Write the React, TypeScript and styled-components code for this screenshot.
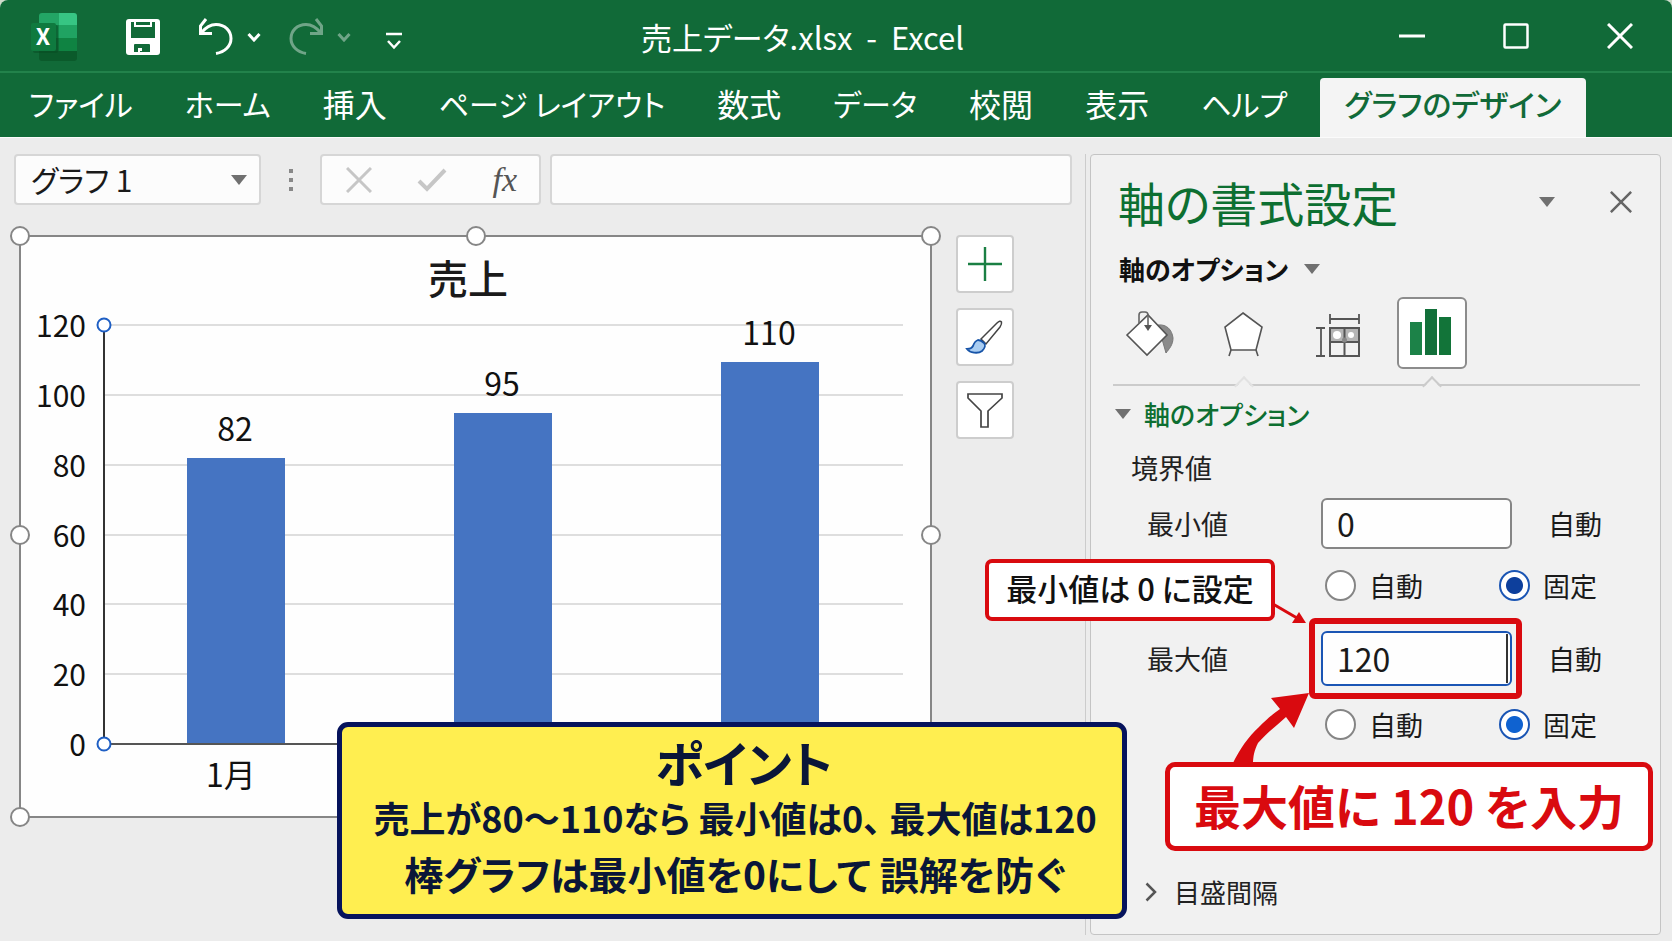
import React, { useState } from "react";
import styled, { createGlobalStyle, css } from "styled-components";

const GREEN = "#116a38";
const RED = "#d90a0f";
const NAVY = "#06135c";

const GlobalStyle = createGlobalStyle`
  *, *::before, *::after { box-sizing: border-box; }
  body {
    margin: 0;
    background: #cfdccb;
    color: #1a1a1a;
    font-family: "Noto Sans CJK JP", "Noto Sans", sans-serif;
    font-feature-settings: "palt";
  }
  button, input, select { font: inherit; font-feature-settings: inherit; color: inherit; margin: 0; padding: 0; }
  button { background: none; border: 0; cursor: pointer; }
  svg { display: block; }
`;

const Window = styled.div`
  display: flex;
  flex-direction: column;
  min-height: 100vh;
  overflow: hidden;
  background: #ececec;
  border-radius: 8px 8px 0 0;
`;

/* ---------- title bar ---------- */

const TitleBar = styled.header`
  display: flex;
  align-items: center;
  height: 73px;
  background: ${GREEN};
  border-bottom: 2px solid #22824b;
  color: #fff;
`;

const QuickAccess = styled.div`
  display: flex;
  align-items: center;
  padding: 3px 0 0 30px;
`;

const QuickButton = styled.button<{ $gap: number; $dim?: boolean }>`
  margin-left: ${(p) => p.$gap}px;
  opacity: ${(p) => (p.$dim ? 0.4 : 1)};
`;

const DocumentTitle = styled.h1`
  flex: 1;
  margin: 0;
  padding: 2px 157px 0 0;
  text-align: center;
  font-size: 31px;
  line-height: 40px;
  font-weight: 400;
  white-space: pre;
`;

const WindowControls = styled.div`
  display: flex;
`;

const WindowButton = styled.button`
  display: grid;
  place-items: center;
  width: 104px;
  height: 71px;
`;

/* ---------- ribbon tabs ---------- */

const Ribbon = styled.nav`
  display: flex;
  align-items: flex-end;
  height: 65px;
  padding-left: 3px;
  background: ${GREEN};
  border-bottom: 1px solid #fbfbfb;
`;

const RibbonTab = styled.button<{ $kanji?: boolean; $active?: boolean }>`
  height: 59px;
  padding: 0 26px 9px;
  font-size: ${(p) => (p.$kanji ? 32 : 30)}px;
  line-height: 48px;
  color: #fff;
  white-space: nowrap;
  ${(p) =>
    p.$active &&
    css`
      margin-left: 7px;
      padding: 0 25px 9px 24px;
      color: ${GREEN};
      font-weight: 500;
      background: #f4f4f4;
      border-radius: 4px 4px 0 0;
    `}
`;

/* ---------- work area ---------- */

const Workspace = styled.main`
  position: relative;
  flex: 1;
  display: grid;
  grid-template-columns: minmax(0, 1fr) 571px;
  padding: 16px 11px 6px 0;
`;

const SheetArea = styled.section`
  margin-right: 4px;
  padding: 0 13px 0 14px;
  border-right: 1px solid #cccccc;
`;

const FormulaRow = styled.div`
  display: flex;
  align-items: stretch;
  height: 51px;
`;

const boxed = css`
  background: #fcfcfc;
  border: 2px solid #d6d6d6;
  border-radius: 4px;
`;

const NameBox = styled.div`
  ${boxed}
  display: flex;
  align-items: center;
  width: 247px;
  padding-right: 12px;
`;

const NameSelect = styled.select`
  flex: 1;
  appearance: none;
  background: none;
  border: 0;
  outline: 0;
  padding: 0 0 2px 15px;
  font-size: 30px;
  line-height: 44px;
`;

const Dots = styled.div`
  display: grid;
  place-items: center;
  width: 59px;
`;

const FormulaTools = styled.div`
  ${boxed}
  display: flex;
  align-items: center;
  justify-content: space-between;
  width: 221px;
  padding: 0 22px 0 24px;
`;

const FxButton = styled.button`
  font-family: "Liberation Serif", serif;
  font-style: italic;
  font-size: 34px;
  line-height: 36px;
  color: #555;
`;

const FormulaInput = styled.input`
  ${boxed}
  flex: 1;
  min-width: 0;
  margin-left: 9px;
  padding: 0 12px;
  font-size: 30px;
`;

const ChartRow = styled.div`
  display: flex;
  align-items: flex-start;
  gap: 24px;
  padding: 30px 58px 0 5px;
`;

const ChartFrame = styled.figure`
  position: relative;
  flex: 1;
  min-width: 0;
  margin: 0;
  background: #fefefe;
  border: 2px solid #868686;
`;

const HandleLayer = styled.div`
  position: absolute;
  inset: -1px;
`;

const Handle = styled.span<{ $x: number; $y: number }>`
  position: absolute;
  left: ${(p) => p.$x}%;
  top: ${(p) => p.$y}%;
  width: 20px;
  height: 20px;
  margin: -10px 0 0 -10px;
  background: #fff;
  border: 2px solid #868686;
  border-radius: 50%;
`;

const ChartTools = styled.div`
  display: flex;
  flex-direction: column;
  gap: 15px;
`;

const ToolButton = styled.button`
  width: 58px;
  height: 58px;
  background: #fff;
  border: 2px solid #cdcdcd;
  border-radius: 4px;
  svg { margin: -2px; }
`;

/* ---------- format pane ---------- */

const Pane = styled.aside`
  position: relative;
  display: flex;
  flex-direction: column;
  padding: 17px 20px 24px 22px;
  background: #f1f1f1;
  border: 1px solid #c4c4c4;
  border-radius: 4px;
`;

const PaneHeader = styled.div`
  display: flex;
  align-items: center;
  padding-left: 5px;
`;

const PaneTitle = styled.h2`
  flex: 1;
  margin: 0;
  font-size: 47px;
  line-height: 60px;
  font-weight: 400;
  color: #0d6f31;
`;

const PaneButton = styled.button`
  display: grid;
  place-items: center;
  width: 38px;
  height: 38px;
  margin-left: 36px;
`;

const OptionsMenu = styled.button`
  display: flex;
  align-items: center;
  gap: 16px;
  margin-top: 19px;
  padding-left: 6px;
  font-size: 26px;
  line-height: 36px;
  font-weight: 700;
  color: #111;
`;

const IconTabs = styled.div`
  display: flex;
  gap: 24px;
  margin-top: 10px;
  padding: 0 0 15px 2px;
  border-bottom: 2px solid #cbcbcb;
`;

const IconTab = styled.button<{ $selected?: boolean; $notch?: string }>`
  position: relative;
  width: 70px;
  height: 72px;
  ${(p) =>
    p.$selected &&
    css`
      background: #fff;
      border: 2px solid #8c8c8c;
      border-radius: 6px;
      svg { margin: -2px; }
    `}
  ${(p) =>
    p.$notch &&
    css`
      &::after {
        content: "";
        position: absolute;
        left: 50%;
        bottom: ${p.$selected ? -26 : -24}px;
        width: 14px;
        height: 14px;
        margin-left: -7px;
        background: linear-gradient(135deg, #f1f1f1 50%, transparent 50%);
        border: solid ${p.$notch};
        border-width: 2px 0 0 2px;
        transform: rotate(45deg);
      }
    `}
`;

const SectionToggle = styled.button<{ $top: number; $plain?: boolean }>`
  display: flex;
  align-items: center;
  gap: ${(p) => (p.$plain ? 17 : 12)}px;
  margin-top: ${(p) => p.$top}px;
  padding-left: ${(p) => (p.$plain ? 32 : 1)}px;
  font-size: 26px;
  line-height: 36px;
  font-weight: ${(p) => (p.$plain ? 400 : 500)};
  color: ${(p) => (p.$plain ? "#222" : "#0d6f31")};
`;

const GroupLabel = styled.legend`
  padding: 0;
  font-size: 27px;
  line-height: 36px;
  color: #222;
`;

const Bounds = styled.fieldset`
  min-width: 0;
  margin: 18px 0 0;
  padding: 0 0 0 18px;
  border: 0;
  font-size: 27px;
  line-height: 31px;
`;

const BoundRow = styled.div<{ $top: number }>`
  display: grid;
  grid-template-columns: 174px 191px auto;
  align-items: center;
  margin-top: ${(p) => p.$top}px;
  padding-left: 16px;
`;

const BoundLabel = styled.label`
  color: #222;
`;

const AutoText = styled.span`
  padding-left: 36px;
`;

const ValueInput = styled.input<{ $focused?: boolean }>`
  width: 100%;
  height: ${(p) => (p.$focused ? 55 : 51)}px;
  padding: 0 14px 2px;
  font-size: 32px;
  background: #fefefe;
  border: 2px solid ${(p) => (p.$focused ? "#1a55b4" : "#858585")};
  border-radius: 6px;
  outline: 0;
`;

const Highlighted = styled.div`
  position: relative;
  &::before {
    content: "";
    position: absolute;
    inset: -13px -10px -13px -12px;
    border: 6px solid ${RED};
    border-radius: 6px;
  }
  &::after {
    content: "";
    position: absolute;
    top: 3px;
    bottom: 3px;
    right: 4px;
    width: 2px;
    background: #333;
  }
`;

const RadioRow = styled.div<{ $top: number }>`
  display: grid;
  grid-template-columns: 174px auto;
  margin-top: ${(p) => p.$top}px;
  padding-left: 194px;
`;

const RadioLabel = styled.label`
  display: flex;
  align-items: center;
  gap: 13px;
`;

const Radio = styled.input<{ $dot: string }>`
  appearance: none;
  width: 31px;
  height: 31px;
  background: #fff;
  border: 2px solid #858585;
  border-radius: 50%;
  &:checked {
    border-color: #1a55b4;
    background: radial-gradient(circle, ${(p) => p.$dot} 8px, #fff 9px);
  }
`;

/* ---------- annotations ---------- */

const Callout = styled.div`
  position: absolute;
  display: grid;
  place-items: center;
  padding-bottom: 4px;
  background: #fff;
  border: solid ${RED};
  white-space: nowrap;
`;

const MinCallout = styled(Callout)`
  left: -106px;
  top: 404px;
  width: 290px;
  height: 62px;
  border-width: 4px;
  border-radius: 7px;
  font-size: 31px;
  font-weight: 500;
  line-height: 40px;
  color: #111;
`;

const MaxCallout = styled(Callout)`
  right: 7px;
  top: 607px;
  width: 488px;
  height: 89px;
  border-width: 5px;
  border-radius: 10px;
  font-size: 47px;
  font-weight: 700;
  line-height: 60px;
  color: ${RED};
`;

const Arrows = styled.svg`
  position: absolute;
  left: 129px;
  top: 436px;
`;

const PointBox = styled.section`
  position: absolute;
  z-index: 1;
  left: 337px;
  bottom: 22px;
  width: 790px;
  padding: 8px 0 13px;
  background: #ffee50;
  border: 5px solid ${NAVY};
  border-radius: 11px;
  text-align: center;
  color: #0a1638;
  font-weight: 700;
`;

const PointTitle = styled.h3`
  margin: 0;
  padding-left: 24px;
  font-size: 49px;
  line-height: 54px;
`;

const PointLine = styled.p<{ $size: number }>`
  margin: 0;
  padding-left: 6px;
  font-size: ${(p) => p.$size}px;
  line-height: 56px;
  white-space: nowrap;
`;

/* ---------- icons ---------- */

const Caret = ({ w = 16, h = 10 }: { w?: number; h?: number }) => (
  <svg width={w} height={h} viewBox="0 0 16 10" aria-hidden="true">
    <path d="M0 0H16L8 10Z" fill="#707070" />
  </svg>
);

const ExcelLogo = () => (
  <svg width="48" height="50" viewBox="0 0 48 50" aria-hidden="true">
    <clipPath id="sheet"><rect x="9" y="1" width="38" height="48" rx="3" /></clipPath>
    <g clipPath="url(#sheet)">
      <rect x="9" y="1" width="20" height="12" fill="#23a565" />
      <rect x="29" y="1" width="18" height="12" fill="#37c583" />
      <rect x="9" y="13" width="20" height="13" fill="#13854a" />
      <rect x="29" y="13" width="18" height="13" fill="#20a362" />
      <rect x="9" y="26" width="20" height="13" fill="#0e6b37" />
      <rect x="29" y="26" width="18" height="13" fill="#0f8342" />
      <rect x="9" y="39" width="38" height="10" fill="#0b5a2b" />
    </g>
    <rect x="3" y="13" width="25" height="28" rx="2" fill="#084a22" opacity="0.5" />
    <rect x="1" y="11" width="25" height="28" rx="2" fill="#0f7a3f" />
    <text x="13" y="33" textAnchor="middle" fontSize="23" fontWeight="700" fill="#fff">X</text>
  </svg>
);

const SaveIcon = () => (
  <svg width="34" height="36" viewBox="0 0 34 36" aria-hidden="true">
    <rect width="34" height="36" rx="3" fill="#fff" />
    <path d="M5 3H29V19H5Z" fill={GREEN} />
    <path d="M9 3V7H25V3" fill="none" stroke="#fff" strokeWidth="2" />
    <path d="M8 33V26Q8 25 9 25H23Q24 25 24 26V33Z" fill={GREEN} />
    <path d="M12 29H16V32H14V33H12Z" fill="#fff" />
  </svg>
);

const UndoIcon = ({ flip }: { flip?: boolean }) => (
  <svg width="36" height="38" viewBox="0 0 36 38" aria-hidden="true">
    <g fill="none" stroke="#fff" strokeWidth="3" transform={flip ? "matrix(-1 0 0 1 36 0)" : undefined}>
      <path d="M3 15C8 9 12 6.500 18 6.500C27 6.500 33 13 33 20.500C33 28 27 34 18 35.500" />
      <path d="M8 1L2.500 8V15.500H14" />
    </g>
  </svg>
);

const ChevronDown = () => (
  <svg width="14" height="10" viewBox="0 0 14 10" aria-hidden="true">
    <path d="M1.500 2L7 8L12.500 2" fill="none" stroke="#fff" strokeWidth="3" />
  </svg>
);

const CustomizeIcon = () => (
  <svg width="16" height="26" viewBox="0 -8 16 26" aria-hidden="true">
    <path d="M0 2H16M2 9L8 15.500L14 9" fill="none" stroke="#fff" strokeWidth="2.500" />
  </svg>
);

const CrossIcon = ({ size, color, width }: { size: number; color: string; width: number }) => (
  <svg width={size} height={size} viewBox="0 0 26 26" aria-hidden="true">
    <path d="M1 1L25 25M25 1L1 25" stroke={color} strokeWidth={width} />
  </svg>
);

const BrushIcon = () => (
  <svg width="58" height="58" viewBox="0 0 58 58" aria-hidden="true">
    <path d="M25 31L41 15Q44 12 45.500 14Q46 16 44 19L30 36Z" fill="#fff" stroke="#444" strokeWidth="1.500" />
    <path d="M22 32C19 33 18 35 17 38C16 40 14 41 11 41C14 45 22 46 26 43C29 40 30 37 28 35Q25 32 22 32Z" fill="#a9cdf2" stroke="#1754a8" strokeWidth="1.800" />
  </svg>
);

const FilterIcon = () => (
  <svg width="58" height="58" viewBox="0 0 58 58" aria-hidden="true">
    <path d="M12 13H46V17L32 30V46H25V30L12 17Z" fill="#fff" stroke="#444" strokeWidth="1.700" />
  </svg>
);

const BucketIcon = () => (
  <svg width="70" height="72" viewBox="0 0 70 72" aria-hidden="true">
    <path d="M43 28C52 27 57 33 58 41C58 48 54 52 51 56Z" fill="#8a8a8a" stroke="#777" />
    <path d="M12 38L33 18L52 38L32 58Z" fill="#fff" stroke="#555" strokeWidth="1.600" />
    <path d="M24 27V18Q24 15 27 15H30Q33 15 33 18V30" fill="none" stroke="#666" strokeWidth="1.600" />
    <path d="M29 28H37L33 34Z" fill="#555" />
  </svg>
);

const PentagonIcon = () => (
  <svg width="70" height="72" viewBox="0 0 70 72" aria-hidden="true">
    <path d="M34 16L53 30L47 53H22L16 30Z" fill="#fff" stroke="#555" strokeWidth="1.600" />
    <path d="M22 53L20 59M47 53L49 59" stroke="#555" strokeWidth="1.600" />
  </svg>
);

const SizeIcon = () => (
  <svg width="70" height="72" viewBox="0 0 70 72" aria-hidden="true">
    <path d="M27 22H56M27 17V27M56 17V27M18 31V59M13 31H22M13 59H22" stroke="#555" strokeWidth="1.800" />
    <rect x="27" y="31" width="29" height="28" fill="#f1f1f1" stroke="#555" strokeWidth="2" />
    <rect x="28" y="32" width="27" height="12" fill="#b5b5b5" />
    <circle cx="34" cy="38" r="4" fill="#fff" />
    <circle cx="48" cy="38" r="3" fill="#fff" />
    <path d="M27 45H56M41.500 31V59" stroke="#555" strokeWidth="2" />
    <circle cx="41.500" cy="43" r="2.500" fill="#888" />
  </svg>
);

const ColumnsIcon = () => (
  <svg width="70" height="72" viewBox="0 0 70 72" aria-hidden="true">
    <rect x="13" y="25" width="12" height="33" fill="#1c8248" />
    <rect x="28" y="12" width="12" height="46" fill="#12703a" />
    <rect x="42" y="20" width="12" height="38" fill="#127439" />
  </svg>
);

/* ---------- chart ---------- */

const sales = [
  { label: "82", value: 82, month: "1月" },
  { label: "95", value: 94.7 },
  { label: "110", value: 109.4 },
];
const ticks = [120, 100, 80, 60, 40, 20, 0];
const plot = { left: 83, right: 882, top: 88, bottom: 507 };
const yOf = (v: number) => Math.round(plot.bottom - (v * (plot.bottom - plot.top)) / 120);

const ChartText = styled.text`
  font-size: 32px;
  fill: #111;
`;

const AxisText = styled.text`
  font-size: 30px;
  fill: #111;
  text-anchor: end;
`;

const ChartTitle = styled.text`
  font-size: 40px;
  font-weight: 500;
  fill: #1a1a1a;
  text-anchor: middle;
`;

const SalesChart = () => (
  <svg width="100%" viewBox="0 0 909 579" role="img" aria-label="売上">
    <ChartTitle x="447" y="57">売上</ChartTitle>
    {ticks.map((t) => (
      <g key={t}>
        {t > 0 && <path d={`M${plot.left} ${yOf(t)}H${plot.right}`} stroke="#dedede" strokeWidth="2" />}
        <AxisText x="65" y={yOf(t) + 12}>{t}</AxisText>
      </g>
    ))}
    {sales.map((s, i) => {
      const x = 166 + i * 267;
      return (
        <g key={s.label} textAnchor="middle">
          <rect x={x} y={yOf(s.value)} width="98" height={plot.bottom - yOf(s.value)} fill="#4574c2" />
          <ChartText x={x + 48} y={yOf(s.value) - 17}>{s.label}</ChartText>
          {s.month && <ChartText x={x + 44} y="550">{s.month}</ChartText>}
        </g>
      );
    })}
    <path d={`M${plot.left} ${plot.bottom}H${plot.right}`} stroke="#555" strokeWidth="2" />
    <path d={`M${plot.left} ${plot.top}V${plot.bottom}`} stroke="#333" strokeWidth="2" />
    {[plot.top, plot.bottom].map((y) => (
      <circle key={y} cx={plot.left} cy={y} r="6.500" fill="#fff" stroke="#1f5fc4" strokeWidth="2" />
    ))}
  </svg>
);

const handles = [
  [0, 0], [50, 0], [100, 0], [0, 51.5], [100, 51.5], [0, 100], [50, 100], [100, 100],
];

const tabs = [
  { name: "ファイル" },
  { name: "ホーム" },
  { name: "挿入", kanji: true },
  { name: "ページ レイアウト" },
  { name: "数式", kanji: true },
  { name: "データ" },
  { name: "校閲", kanji: true },
  { name: "表示", kanji: true },
  { name: "ヘルプ" },
];

const BoundMode = ({ name, top, dot }: { name: string; top: number; dot: string }) => (
  <RadioRow $top={top}>
    <RadioLabel>
      <Radio type="radio" name={name} value="auto" $dot={dot} />
      自動
    </RadioLabel>
    <RadioLabel>
      <Radio type="radio" name={name} value="fixed" defaultChecked $dot={dot} />
      固定
    </RadioLabel>
  </RadioRow>
);

export default function App() {
  const [min, setMin] = useState("0");
  const [max, setMax] = useState("120");

  return (
    <Window lang="ja">
      <GlobalStyle />
      <TitleBar>
        <QuickAccess>
          <ExcelLogo />
          <QuickButton $gap={48} aria-label="保存"><SaveIcon /></QuickButton>
          <QuickButton $gap={38} aria-label="元に戻す"><UndoIcon /></QuickButton>
          <QuickButton $gap={13} aria-label="元に戻す履歴"><ChevronDown /></QuickButton>
          <QuickButton $gap={27} $dim aria-label="やり直し"><UndoIcon flip /></QuickButton>
          <QuickButton $gap={13} $dim aria-label="やり直し履歴"><ChevronDown /></QuickButton>
          <QuickButton $gap={35} aria-label="クイック アクセスのカスタマイズ"><CustomizeIcon /></QuickButton>
        </QuickAccess>
        <DocumentTitle>売上データ.xlsx  -  Excel</DocumentTitle>
        <WindowControls>
          <WindowButton aria-label="最小化">
            <svg width="26" height="26" viewBox="0 0 26 26"><path d="M0 13H26" stroke="#fff" strokeWidth="3" /></svg>
          </WindowButton>
          <WindowButton aria-label="最大化">
            <svg width="26" height="26" viewBox="0 0 26 26"><rect x="1.500" y="1.500" width="23" height="23" rx="1" fill="none" stroke="#fff" strokeWidth="2.500" /></svg>
          </WindowButton>
          <WindowButton aria-label="閉じる"><CrossIcon size={26} color="#fff" width={3} /></WindowButton>
        </WindowControls>
      </TitleBar>

      <Ribbon>
        {tabs.map((t) => <RibbonTab key={t.name} $kanji={t.kanji}>{t.name}</RibbonTab>)}
        <RibbonTab $active>グラフのデザイン</RibbonTab>
      </Ribbon>

      <Workspace>
        <SheetArea>
          <FormulaRow>
            <NameBox>
              <NameSelect aria-label="名前ボックス"><option>グラフ 1</option></NameSelect>
              <Caret />
            </NameBox>
            <Dots>
              <svg width="4" height="22" viewBox="0 0 4 22"><path d="M0 0H4V4H0ZM0 9H4V13H0ZM0 18H4V22H0Z" fill="#888" /></svg>
            </Dots>
            <FormulaTools>
              <button aria-label="キャンセル"><CrossIcon size={26} color="#c6c6c6" width={3} /></button>
              <button aria-label="入力">
                <svg width="30" height="24" viewBox="0 0 30 24"><path d="M2 13L10 21L28 2" fill="none" stroke="#c6c6c6" strokeWidth="4" /></svg>
              </button>
              <FxButton aria-label="関数の挿入">fx</FxButton>
            </FormulaTools>
            <FormulaInput aria-label="数式バー" />
          </FormulaRow>

          <ChartRow>
            <ChartFrame>
              <SalesChart />
              <HandleLayer>
                {handles.map(([x, y]) => <Handle key={`${x}-${y}`} $x={x} $y={y} />)}
              </HandleLayer>
            </ChartFrame>
            <ChartTools>
              <ToolButton aria-label="グラフ要素">
                <svg width="58" height="58" viewBox="0 0 58 58"><path d="M12 29H46M29 12V46" stroke="#1a7f43" strokeWidth="2.400" /></svg>
              </ToolButton>
              <ToolButton aria-label="グラフ スタイル"><BrushIcon /></ToolButton>
              <ToolButton aria-label="グラフ フィルター"><FilterIcon /></ToolButton>
            </ChartTools>
          </ChartRow>
        </SheetArea>

        <PointBox>
          <PointTitle>ポイント</PointTitle>
          <PointLine $size={36}>売上が80〜110なら 最小値は0、 最大値は120</PointLine>
          <PointLine $size={39}>棒グラフは最小値を0にして 誤解を防ぐ</PointLine>
        </PointBox>

        <Pane>
          <PaneHeader>
            <PaneTitle>軸の書式設定</PaneTitle>
            <PaneButton aria-label="作業ウィンドウのオプション"><Caret w={18} /></PaneButton>
            <PaneButton aria-label="閉じる"><CrossIcon size={22} color="#666" width={3} /></PaneButton>
          </PaneHeader>
          <OptionsMenu>軸のオプション<Caret /></OptionsMenu>
          <IconTabs>
            <IconTab aria-label="塗りつぶしと線"><BucketIcon /></IconTab>
            <IconTab aria-label="効果" $notch="#e2e2e2"><PentagonIcon /></IconTab>
            <IconTab aria-label="サイズとプロパティ"><SizeIcon /></IconTab>
            <IconTab aria-label="軸のオプション" $selected $notch="#cbcbcb"><ColumnsIcon /></IconTab>
          </IconTabs>
          <SectionToggle $top={10}><Caret w={18} />軸のオプション</SectionToggle>

          <Bounds>
            <GroupLabel>境界値</GroupLabel>
            <BoundRow $top={12}>
              <BoundLabel htmlFor="axis-min">最小値</BoundLabel>
              <ValueInput id="axis-min" value={min} onChange={(e) => setMin(e.target.value)} />
              <AutoText>自動</AutoText>
            </BoundRow>
            <BoundMode name="min-mode" top={21} dot="#0d3f9c" />
            <BoundRow $top={30}>
              <BoundLabel htmlFor="axis-max">最大値</BoundLabel>
              <Highlighted>
                <ValueInput id="axis-max" $focused value={max} onChange={(e) => setMax(e.target.value)} />
              </Highlighted>
              <AutoText>自動</AutoText>
            </BoundRow>
            <BoundMode name="max-mode" top={23} dot="#0f62d0" />
          </Bounds>

          <SectionToggle $top={134} $plain>
            <svg width="12" height="20" viewBox="0 0 12 20"><path d="M1.500 1.500L10 10L1.500 18.500" fill="none" stroke="#555" strokeWidth="2.500" /></svg>
            目盛間隔
          </SectionToggle>

          <Arrows width="94" height="174" viewBox="0 0 94 174" aria-hidden="true">
            <path d="M53 13L77 27" stroke={RED} strokeWidth="3" />
            <path d="M86 32L72 32L79 21Z" fill={RED} />
            <path d="M12 174C20 158 28 146 39 136C47 128 54 122 60 118L51 107L89 102L74 137L66 126C56 135 46 143 38 152C34 160 33 166 33 174Z" fill={RED} />
          </Arrows>
          <MinCallout>最小値は 0 に設定</MinCallout>
          <MaxCallout>最大値に 120 を入力</MaxCallout>
        </Pane>
      </Workspace>
    </Window>
  );
}
